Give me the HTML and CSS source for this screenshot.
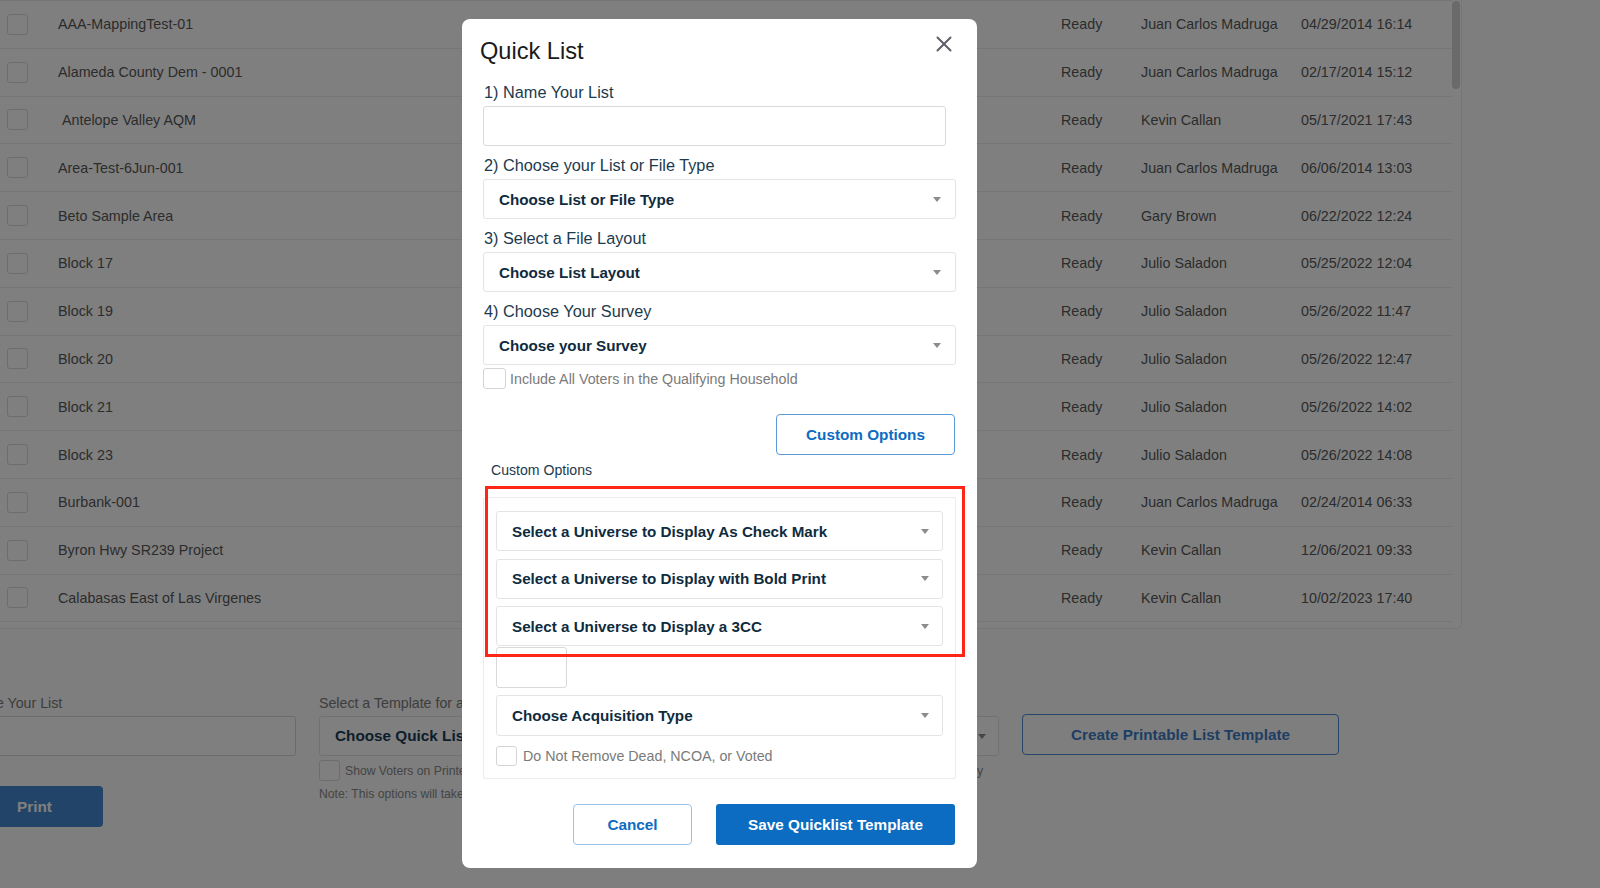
FILE: index.html
```html
<!DOCTYPE html>
<html lang="en">
<head>
<meta charset="utf-8">
<title>Quick List</title>
<link rel="stylesheet" href="styles.css">
</head>
<body>
<div class="page">
  <div class="table-wrap">
    <div class="rows">
      <div class="row"><span class="cb"></span><span>AAA-MappingTest-01</span><span>Ready</span><span>Juan Carlos Madruga</span><span>04/29/2014 16:14</span></div>
      <div class="row"><span class="cb"></span><span>Alameda County Dem - 0001</span><span>Ready</span><span>Juan Carlos Madruga</span><span>02/17/2014 15:12</span></div>
      <div class="row"><span class="cb"></span><span>&nbsp;Antelope Valley AQM</span><span>Ready</span><span>Kevin Callan</span><span>05/17/2021 17:43</span></div>
      <div class="row"><span class="cb"></span><span>Area-Test-6Jun-001</span><span>Ready</span><span>Juan Carlos Madruga</span><span>06/06/2014 13:03</span></div>
      <div class="row"><span class="cb"></span><span>Beto Sample Area</span><span>Ready</span><span>Gary Brown</span><span>06/22/2022 12:24</span></div>
      <div class="row"><span class="cb"></span><span>Block 17</span><span>Ready</span><span>Julio Saladon</span><span>05/25/2022 12:04</span></div>
      <div class="row"><span class="cb"></span><span>Block 19</span><span>Ready</span><span>Julio Saladon</span><span>05/26/2022 11:47</span></div>
      <div class="row"><span class="cb"></span><span>Block 20</span><span>Ready</span><span>Julio Saladon</span><span>05/26/2022 12:47</span></div>
      <div class="row"><span class="cb"></span><span>Block 21</span><span>Ready</span><span>Julio Saladon</span><span>05/26/2022 14:02</span></div>
      <div class="row"><span class="cb"></span><span>Block 23</span><span>Ready</span><span>Julio Saladon</span><span>05/26/2022 14:08</span></div>
      <div class="row"><span class="cb"></span><span>Burbank-001</span><span>Ready</span><span>Juan Carlos Madruga</span><span>02/24/2014 06:33</span></div>
      <div class="row"><span class="cb"></span><span>Byron Hwy SR239 Project</span><span>Ready</span><span>Kevin Callan</span><span>12/06/2021 09:33</span></div>
      <div class="row"><span class="cb"></span><span>Calabasas East of Las Virgenes</span><span>Ready</span><span>Kevin Callan</span><span>10/02/2023 17:40</span></div>
    </div>
    <div class="track"><div class="thumb"></div></div>
  </div>

  <div class="bottom">
    <div class="col-name">
      <div class="b-label">Name Your List</div>
      <div class="b-input"></div>
      <div class="print-btn">Print</div>
    </div>
    <div class="col-template">
      <div class="b-label">Select a Template for a Quick List</div>
      <div class="b-select"><span>Choose Quick List Template</span><i class="caret"></i></div>
      <div class="b-check"><span class="cb small"></span><span>Show Voters on Printed List: the voters will appear on the printed list sorted by Precinct, Street Name, and House Only</span></div>
      <div class="b-note">Note: This options will take effect only on the printed list</div>
    </div>
    <div class="col-create">
      <div class="create-btn">Create Printable List Template</div>
    </div>
  </div>
</div>

<div class="overlay">
  <div class="modal">
    <div class="modal-head">
      <h2 class="modal-title">Quick List</h2>
      <span class="close" aria-label="Close">
        <svg width="16" height="16" viewBox="0 0 16 16"><path d="M1.5 1.5 L14.5 14.5 M14.5 1.5 L1.5 14.5" stroke="#5d5f6b" stroke-width="2" stroke-linecap="round" fill="none"/></svg>
      </span>
    </div>

    <div class="field-label first">1) Name Your List</div>
    <div class="text-input"></div>

    <div class="field-label">2) Choose your List or File Type</div>
    <div class="select"><span>Choose List or File Type</span><i class="caret"></i></div>

    <div class="field-label">3) Select a File Layout</div>
    <div class="select"><span>Choose List Layout</span><i class="caret"></i></div>

    <div class="field-label">4) Choose Your Survey</div>
    <div class="select"><span>Choose your Survey</span><i class="caret"></i></div>

    <div class="check-row"><span class="cb m"></span><span>Include All Voters in the Qualifying Household</span></div>

    <div class="custom-row"><div class="outline-btn">Custom Options</div></div>

    <div class="small-label">Custom Options</div>

    <div class="panel">
      <div class="select inner"><span>Select a Universe to Display As Check Mark</span><i class="caret"></i></div>
      <div class="select inner"><span>Select a Universe to Display with Bold Print</span><i class="caret"></i></div>
      <div class="select inner last3"><span>Select a Universe to Display a 3CC</span><i class="caret"></i></div>
      <div class="mini-box"></div>
      <div class="select inner acq"><span>Choose Acquisition Type</span><i class="caret"></i></div>
      <div class="check-row in-panel"><span class="cb m2"></span><span>Do Not Remove Dead, NCOA, or Voted</span></div>
    </div>

    <div class="actions">
      <div class="cancel-btn">Cancel</div>
      <div class="save-btn">Save Quicklist Template</div>
    </div>

    <div class="highlight"></div>
  </div>
</div>
</body>
</html>
```
FILE: styles.css
```css
html, body {
  margin: 0;
  padding: 0;
}
body {
  width: 1600px;
  height: 888px;
  overflow: hidden;
  background: #fcfcfc;
  font-family: "Liberation Sans", Arial, sans-serif;
  color: #555;
}

/* ---------- background page ---------- */
.page {
  width: 1600px;
}
.table-wrap {
  display: flex;
  width: 1462px;
  background: #fff;
  border-bottom: 1px solid #ececec;
  border-right: 1px solid #ececec;
  border-bottom-right-radius: 6px;
  padding-bottom: 6px;
  box-sizing: border-box;
}
.rows {
  width: 1453px;
  border-top: 1px solid #e9e9e9;
}
.row {
  display: grid;
  grid-template-columns: 58px 1003px 80px 160px 1fr;
  align-items: center;
  height: 46.8px;
  border-bottom: 1px solid #ececec;
  font-size: 14.3px;
  color: #585858;
  white-space: nowrap;
}
.cb {
  display: block;
  width: 21px;
  height: 21px;
  box-sizing: border-box;
  border: 1px solid #dadada;
  border-radius: 3px;
  background: #fff;
  margin-left: 7px;
}
.track {
  width: 9px;
  padding-top: 1px;
}
.thumb {
  width: 8px;
  height: 88px;
  border-radius: 4px;
  background: #d4d4d4;
}

.bottom {
  display: flex;
  margin-left: -34px;
  margin-top: 66px;
  align-items: flex-start;
}
.b-label {
  font-size: 14.2px;
  line-height: 16px;
  color: #7a7a7a;
  margin-bottom: 5px;
  white-space: nowrap;
}
.col-name {
  width: 330px;
}
.b-input {
  height: 40px;
  box-sizing: border-box;
  border: 1px solid #d6d6d6;
  border-radius: 3px;
  background: #fff;
}
.print-btn {
  margin-top: 30px;
  width: 137px;
  height: 41px;
  border-radius: 4px;
  background: #4688d3;
  color: #fff;
  font-weight: bold;
  font-size: 15.3px;
  display: flex;
  align-items: center;
  justify-content: center;
}
.col-template {
  margin-left: 23px;
  width: 680px;
}
.b-select {
  height: 40px;
  box-sizing: border-box;
  border: 1px solid #e3e3e3;
  border-radius: 3px;
  background: #fff;
  display: flex;
  align-items: center;
  justify-content: space-between;
  padding: 0 12px 0 15px;
  font-weight: bold;
  font-size: 15.3px;
  color: #1b3d55;
}
.b-check {
  display: flex;
  align-items: center;
  gap: 5px;
  margin-top: 4px;
  font-size: 12.2px;
  color: #8a8a8a;
  white-space: nowrap;
}
.b-check .cb {
  margin-left: 0;
  flex: none;
}
.b-note {
  margin-top: 5px;
  font-size: 12.2px;
  line-height: 16px;
  color: #8a8a8a;
  white-space: nowrap;
}
.col-create {
  margin-left: 23px;
  padding-top: 19px;
}
.create-btn {
  width: 317px;
  height: 41px;
  box-sizing: border-box;
  border: 1px solid #4f8ad0;
  border-radius: 4px;
  color: #3d7cc6;
  font-weight: bold;
  font-size: 15.3px;
  display: flex;
  align-items: center;
  justify-content: center;
}

/* ---------- overlay + modal ---------- */
.overlay {
  position: fixed;
  inset: 0;
  background: rgba(0, 0, 0, 0.5);
  padding: 19px 0 0 462px;
  box-sizing: border-box;
}
.modal {
  position: relative;
  width: 515px;
  height: 849px;
  box-sizing: border-box;
  padding: 19px 21px 0 21px;
  background: #fff;
  border-radius: 8px;
}
.modal-head {
  display: flex;
  align-items: flex-start;
  justify-content: space-between;
}
.modal-title {
  margin: -1px 0 0 -3px;
  font-weight: normal;
  font-size: 23.6px;
  line-height: 28px;
  color: #1a1a1a;
}
.close {
  display: block;
  width: 16px;
  height: 16px;
  margin: -2px 4px 0 0;
}
.close svg {
  display: block;
}
.field-label {
  font-size: 16.3px;
  line-height: 18px;
  color: #1c3a4e;
  margin: 10px 0 5px 1px;
  white-space: nowrap;
}
.field-label.first {
  margin-top: 18px;
}
.text-input {
  width: 463px;
  height: 40px;
  box-sizing: border-box;
  border: 1px solid #dadada;
  border-radius: 3px;
}
.select {
  height: 40px;
  box-sizing: border-box;
  border: 1px solid #e4e4e4;
  border-radius: 3px;
  background: #fff;
  display: flex;
  align-items: center;
  justify-content: space-between;
  padding: 0 14px 0 15px;
  font-weight: bold;
  font-size: 15.2px;
  color: #0f2b3e;
  white-space: nowrap;
}
.caret {
  display: block;
  width: 0;
  height: 0;
  border-left: 4.5px solid transparent;
  border-right: 4.5px solid transparent;
  border-top: 5px solid #8c8c8c;
}
.check-row {
  display: flex;
  align-items: center;
  gap: 4px;
  margin-top: 3px;
  font-size: 14.25px;
  color: #7a7a7a;
  white-space: nowrap;
}
.check-row .cb {
  margin-left: 0;
  flex: none;
}
.cb.m {
  width: 23px;
  height: 21px;
  border-color: #d4d4d4;
}
.custom-row {
  display: flex;
  justify-content: flex-end;
  margin-top: 25px;
  padding-right: 1px;
}
.outline-btn {
  width: 179px;
  height: 41px;
  box-sizing: border-box;
  border: 1px solid #5a98dc;
  border-radius: 4px;
  color: #0b6cc1;
  font-weight: bold;
  font-size: 15.3px;
  display: flex;
  align-items: center;
  justify-content: center;
}
.small-label {
  margin: 7px 0 0 8px;
  font-size: 14.1px;
  line-height: 16px;
  color: #1c3a4e;
}
.panel {
  margin-top: 19px;
  border: 1px solid #ececec;
  border-radius: 2px;
  padding: 13px 12px 12px 12px;
}
.select.inner {
  padding: 0 13px 0 15px;
  margin-bottom: 7.5px;
}
.select.inner.last3 {
  margin-bottom: 1px;
}
.mini-box {
  width: 71px;
  height: 41px;
  box-sizing: border-box;
  border: 1px solid #d9d9d9;
  border-radius: 3px;
}
.select.inner.acq {
  margin-top: 7px;
  margin-bottom: 0;
  height: 41px;
}
.check-row.in-panel {
  margin-top: 10px;
  gap: 6px;
}
.cb.m2 {
  width: 21px;
  height: 20px;
  border-color: #d4d4d4;
}
.actions {
  display: flex;
  justify-content: flex-end;
  gap: 24px;
  margin-top: 25px;
  padding-right: 1px;
}
.cancel-btn {
  width: 119px;
  height: 41px;
  box-sizing: border-box;
  border: 1px solid #9cc2ea;
  border-radius: 4px;
  color: #0b6cc1;
  font-weight: bold;
  font-size: 15.3px;
  display: flex;
  align-items: center;
  justify-content: center;
}
.save-btn {
  width: 239px;
  height: 41px;
  border-radius: 3px;
  background: #0b6cc1;
  color: #fff;
  font-weight: bold;
  font-size: 15.3px;
  display: flex;
  align-items: center;
  justify-content: center;
}
.highlight {
  position: absolute;
  left: 23px;
  top: 467px;
  width: 480px;
  height: 171px;
  box-sizing: border-box;
  border: 3px solid #ff2618;
  pointer-events: none;
}
```
